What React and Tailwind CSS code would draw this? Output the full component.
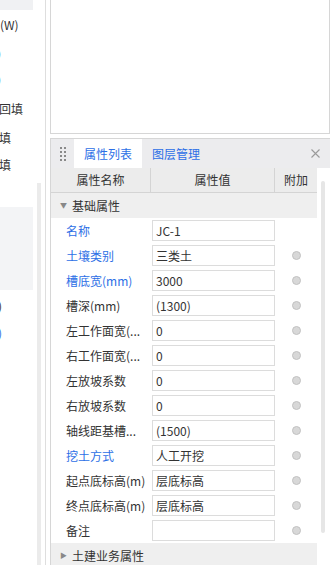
import React from 'react'

const FONT = { fontFamily: '"Noto Sans CJK SC", "Microsoft YaHei", "Noto Sans", sans-serif' }

const rows = [
  { label: '名称', value: 'JC-1', blue: true, dot: false },
  { label: '土壤类别', value: '三类土', blue: true },
  { label: '槽底宽(mm)', value: '3000', blue: true },
  { label: '槽深(mm)', value: '(1300)' },
  { label: '左工作面宽(...', value: '0' },
  { label: '右工作面宽(...', value: '0' },
  { label: '左放坡系数', value: '0' },
  { label: '右放坡系数', value: '0' },
  { label: '轴线距基槽...', value: '(1500)' },
  { label: '挖土方式', value: '人工开挖', blue: true },
  { label: '起点底标高(m)', value: '层底标高' },
  { label: '终点底标高(m)', value: '层底标高' },
  { label: '备注', value: '' },
]

function LeftList() {
  return (
    <div className="w-[33px] shrink-0 overflow-hidden text-[12px] text-[#333]">
      <div className="h-[10px] bg-[#f0f1f3]" />
      <div className="mt-[7px] h-[16px] leading-[16px] whitespace-nowrap">(W)</div>
      <div className="mt-[13px] h-[16px] leading-[16px] whitespace-nowrap -ml-[6px] text-[#2d6fe6]">0</div>
      <div className="mt-[10px] h-[16px] leading-[16px] whitespace-nowrap -ml-[6px] text-[#2d6fe6]">0</div>
      <div className="mt-[13px] h-[16px] leading-[16px] whitespace-nowrap -ml-[1px]">回填</div>
      <div className="mt-[13px] h-[16px] leading-[16px] whitespace-nowrap -ml-[1px]">填</div>
      <div className="mt-[11px] h-[16px] leading-[16px] whitespace-nowrap -ml-[1px]">填</div>
      <div className="mt-[34px] h-[83px] bg-[#f3f4f6]" />
      <div className="mt-[8px] h-[16px] leading-[16px] whitespace-nowrap -ml-[2px]">)</div>
      <div className="mt-[11px] h-[16px] leading-[16px] whitespace-nowrap -ml-[2px] text-[#2d6fe6]">)</div>
    </div>
  )
}

function DragDots() {
  return (
    <div className="grid grid-cols-2 gap-x-[2px] gap-y-[2px]">
      {Array.from({ length: 8 }).map((_, i) => (
        <span key={i} className="block h-[2px] w-[2px] bg-[#8a8a8a]" />
      ))}
    </div>
  )
}

function Dot() {
  return <span className="block h-[9px] w-[9px] rounded-full border border-[#c2c2c2] bg-[#d8d8d8]" />
}

function Row({ row }) {
  return (
    <div className="grid h-[25px] grid-cols-[100px_124px_42px] items-center">
      <div className={`whitespace-nowrap pl-[15px] ${row.blue ? 'text-[#2d6fe6]' : 'text-[#333]'}`}>{row.label}</div>
      <div className="flex h-[21px] items-center border border-[#dcdcdc] bg-white pl-[3px] ml-[1px] text-[#333]">{row.value}</div>
      <div className="flex justify-center pl-[1px]">{row.dot === false ? null : <Dot />}</div>
    </div>
  )
}

function Group({ label, open }) {
  return (
    <div className="flex h-[25px] items-center bg-[#efefef] text-[#333]">
      <span className="ml-[9px] w-[12px] text-[7px] text-[#888]">{open ? '▼' : '▶'}</span>
      <span>{label}</span>
    </div>
  )
}

export default function App() {
  return (
    <div className="flex h-[565px] w-[332px] overflow-hidden bg-white text-[12px]" style={FONT}>
      <LeftList />
      <div className="ml-[4px] flex w-[4px] shrink-0 flex-col pt-[183px]">
        <div className="flex-1 bg-[#ebebeb]" />
      </div>
      <div className="ml-[4px] w-px shrink-0 bg-[#dedede]" />
      <div className="ml-[4px] flex w-[280px] shrink-0 flex-col">
        <div className="h-[134px] shrink-0 border-x border-b border-[#d6d6d6] bg-white" />
        <div className="mt-[4px] flex flex-1 flex-col border-l border-t border-[#d6d6d6]">
          <div className="flex h-[29px] items-stretch bg-[#ececee]">
            <div className="flex w-[23px] items-center justify-center pl-[1px]">
              <DragDots />
            </div>
            <div className="flex w-[68px] items-center justify-center bg-white pt-[1px] text-[#2d6fe6]">属性列表</div>
            <div className="flex items-center pl-[10px] pt-[1px] text-[#2d6fe6]">图层管理</div>
            <div className="ml-auto flex items-center pr-[10px]">
              <svg width="9" height="9" viewBox="0 0 9 9" fill="none" stroke="#9a9a9a" strokeWidth="1.1">
                <path d="M0.5 0.5 L8.5 8.5 M8.5 0.5 L0.5 8.5" />
              </svg>
            </div>
          </div>
          <div className="flex flex-1">
            <div className="w-[266px] shrink-0">
              <div className="grid h-[25px] grid-cols-[100px_124px_42px] border-b border-[#d4d4d4] bg-[#ececec] text-[#333]">
                <div className="flex items-center justify-center border-r border-[#d4d4d4]">属性名称</div>
                <div className="flex items-center justify-center border-r border-[#d4d4d4]">属性值</div>
                <div className="flex items-center justify-center">附加</div>
              </div>
              <Group label="基础属性" open />
              {rows.map((r) => (
                <Row key={r.label} row={r} />
              ))}
              <Group label="土建业务属性" />
            </div>
            <div className="ml-[4px] flex w-[4px] flex-col pt-[13px]">
              <div className="h-[352px] rounded-[2px] bg-[#e6e6e6]" />
            </div>
          </div>
        </div>
      </div>
    </div>
  )
}
